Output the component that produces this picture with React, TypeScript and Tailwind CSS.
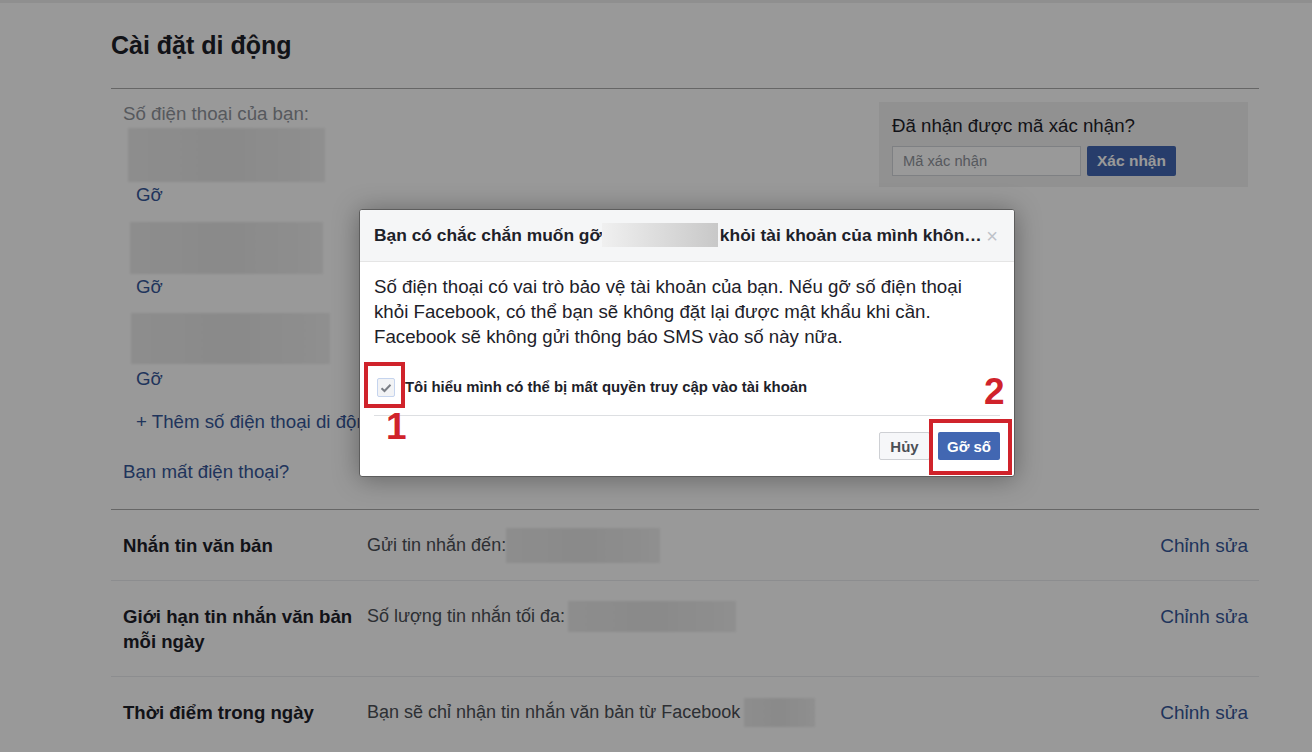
import React from 'react';

const font = "font-['Liberation_Sans','Helvetica',Arial,sans-serif]";

// Blurred placeholder used where the screenshot hides a phone number
const Blur = ({ className }: { className: string }) => (
  <div className={`${className} bg-gradient-to-r from-[#ececec] via-[#e6e6e6] to-[#efefef] blur-[1px]`} />
);

const SettingRow = ({
  label,
  children,
  last,
}: {
  label: React.ReactNode;
  children: React.ReactNode;
  last?: boolean;
}) => (
  <div className={`flex items-start pt-[23px] pb-[22px] leading-[25px] ${last ? '' : 'border-b border-[#e9ebee]'}`}>
    <div className="w-[256px] shrink-0 pl-3 text-[18.6px] font-bold text-[#1d2129]">{label}</div>
    <div className="flex h-[25px] flex-1 items-center text-[18px] text-[#4b4f56]">{children}</div>
    <a className="pr-[11px] text-[19px] text-[#365899]">Chỉnh sửa</a>
  </div>
);

const Remove = ({ className = '' }: { className?: string }) => (
  <a className={`ml-[8px] block text-[18.7px] leading-[25px] text-[#365899] ${className}`}>Gỡ</a>
);

export default function App() {
  return (
    <div className={`relative h-[752px] w-[1312px] overflow-hidden bg-white ${font}`}>
      {/* underlying settings page */}
      <div className="h-[3px] bg-[#eeeeee]" />
      <div className="ml-[111px] w-[1148px]">
        <h1 className="pt-[28px] pb-[28px] text-[25px] font-bold leading-[29px] text-[#1d2129]">Cài đặt di động</h1>
        <div className="border-t border-[#aaaaaa]" />

        <div className="flex justify-between pt-[13px] pb-[25px]">
          <div className="pl-3">
            <div className="text-[18.7px] leading-[24px] text-[#90949c]">Số điện thoại của bạn:</div>
            <div className="pl-[5px]">
              <Blur className="mt-[2px] h-[54px] w-[197px]" />
              <Remove />
              <Blur className="mt-[15px] ml-[2px] h-[52px] w-[193px]" />
              <Remove />
              <Blur className="mt-[14px] ml-[3px] h-[51px] w-[199px]" />
              <Remove className="mt-[2px]" />
            </div>
            <a className="mt-[18px] ml-[13px] block whitespace-nowrap text-[18.7px] leading-[25px] text-[#365899]">+ Thêm số điện thoại di động</a>
            <a className="mt-[25px] block text-[18.7px] leading-[25px] text-[#365899]">Bạn mất điện thoại?</a>
          </div>

          <div className="mr-[11px] h-[85px] w-[369px] bg-[#f2f2f2] px-[13px] pt-[13px]">
            <div className="text-[18.7px] leading-[22px] text-[#1d2129]">Đã nhận được mã xác nhận?</div>
            <div className="mt-[9px] flex gap-[6px]">
              <div className="flex h-[30px] w-[189px] items-center border border-[#d3d6db] bg-white px-[10px] text-[14.7px] text-[#90949c]">
                Mã xác nhận
              </div>
              <button className="h-[30px] w-[89px] rounded-[2px] bg-[#4267b2] text-[15.5px] font-bold text-white">Xác nhận</button>
            </div>
          </div>
        </div>

        <div className="border-t border-[#aaaaaa]" />
        <SettingRow label="Nhắn tin văn bản">
          <span>Gửi tin nhắn đến:</span>
          <Blur className="h-[35px] w-[154px] shrink-0" />
        </SettingRow>
        <SettingRow
          label={
            <>
              Giới hạn tin nhắn văn bản
              <br />
              mỗi ngày
            </>
          }
        >
          <span>Số lượng tin nhắn tối đa:</span>
          <Blur className="ml-[3px] h-[31px] w-[168px] shrink-0" />
        </SettingRow>
        <SettingRow label="Thời điểm trong ngày" last>
          <span>Bạn sẽ chỉ nhận tin nhắn văn bản từ Facebook</span>
          <Blur className="ml-[4px] h-[29px] w-[71px] shrink-0" />
        </SettingRow>
      </div>

      {/* dimming overlay */}
      <div className="absolute inset-0 bg-black/40" />

      {/* confirmation dialog */}
      <div className="absolute left-[359px] top-[209px] w-[656px] overflow-hidden rounded-[3px] border border-[#5d5d5d] bg-white shadow-[0_2px_26px_rgba(0,0,0,0.35)]">
        <div className="flex h-[52px] items-center border-b border-[#e5e5e5] bg-[#f5f6f7] pl-[14px] pr-[16px]">
          <div className="flex min-w-0 flex-1 items-center text-[17.4px] font-bold text-[#1d2129]">
            <span className="shrink-0">Bạn có chắc chắn muốn gỡ</span>
            <div className="h-[24px] w-[116px] shrink-0 bg-gradient-to-r from-[#f0f0f0] via-[#dcdcdc] to-[#c8c8c8]" />
            <span className="min-w-0 truncate pl-[2px]">khỏi tài khoản của mình không?</span>
          </div>
          <span className="ml-[2px] text-[20px] leading-none text-[#bec2c9]">×</span>
        </div>

        <div className="px-[14px] pt-[12px] text-[18.7px] leading-[25px] text-[#1d2129]">
          <p className="whitespace-nowrap">
            Số điện thoại có vai trò bảo vệ tài khoản của bạn. Nếu gỡ số điện thoại
            <br />
            khỏi Facebook, có thể bạn sẽ không đặt lại được mật khẩu khi cần.
            <br />
            Facebook sẽ không gửi thông báo SMS vào số này nữa.
          </p>
          <label className="mt-[26px] flex items-center gap-[10px] pl-[3px] pb-[15px]">
            <span className="flex h-[19px] w-[18px] items-center justify-center rounded-[2px] border border-[#c5d4ee] bg-[#f2f3f5]">
              <svg width="12" height="10" viewBox="0 0 12 10">
                <path d="M1.5 5.2 L4.5 8 L10.5 1.8" fill="none" stroke="#7b7f86" strokeWidth="2" />
              </svg>
            </span>
            <span className="text-[14.9px] font-bold text-[#1d2129]">Tôi hiểu mình có thể bị mất quyền truy cập vào tài khoản</span>
          </label>
          <div className="border-t border-[#dddfe2]" />
          <div className="flex justify-end gap-[8px] py-[16px]">
            <button className="h-[28px] w-[51px] rounded-[2px] border border-[#ced0d4] bg-[#f6f7f9] text-[15px] font-bold text-[#4b4f56]">Hủy</button>
            <button className="h-[28px] w-[62px] rounded-[2px] bg-[#4267b2] text-[15px] font-bold text-white">Gỡ số</button>
          </div>
        </div>
      </div>

      {/* red annotations */}
      <div className="absolute left-[364px] top-[362px] h-[46px] w-[41px] border-[4px] border-[#d0232b]" />
      <div className="absolute left-[386px] top-[409px] text-[37px] font-bold leading-[36px] text-[#d0232b]">1</div>
      <div className="absolute left-[929px] top-[419px] h-[56px] w-[83px] border-[4px] border-[#d0232b]" />
      <div className="absolute left-[984px] top-[374px] text-[37px] font-bold leading-[36px] text-[#d0232b]">2</div>
    </div>
  );
}
